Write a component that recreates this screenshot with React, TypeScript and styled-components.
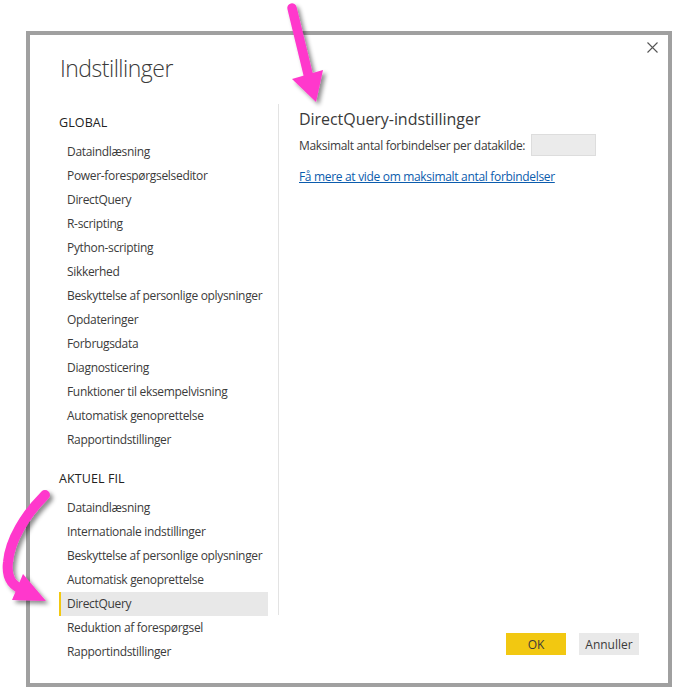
import React from "react";
import styled, { createGlobalStyle } from "styled-components";

const Global = createGlobalStyle`
  html, body { margin: 0; padding: 0; background: #ffffff; }
  body { font-family: "Open Sans", "Noto Sans", sans-serif; color: #333333; }
`;

const Page = styled.div`
  position: relative;
  width: 673px;
  height: 687px;
  overflow: hidden;
  padding: 31px 0 0 26px;
  box-sizing: border-box;
`;

const Dialog = styled.div`
  width: 646px;
  height: 656px;
  box-sizing: border-box;
  border: 4px solid #a0a0a0;
  background: #ffffff;
  display: flex;
  flex-direction: column;
`;

const Header = styled.div`
  display: flex;
  justify-content: space-between;
  align-items: flex-start;
  height: 69px;
  padding: 0 10px 0 30px;
  box-sizing: border-box;
`;

const Title = styled.h1`
  margin: 17px 0 0 0;
  font-size: 23px;
  font-weight: 300;
  line-height: 32px;
  color: #3a3a3a;
  letter-spacing: -0.5px;
`;

const CloseButton = styled.button`
  margin-top: 6px;
  width: 12px;
  height: 12px;
  padding: 0;
  border: none;
  background: transparent;
  display: flex;
  align-items: center;
  justify-content: center;
`;

const Body = styled.div`
  flex: 1;
  display: flex;
  min-height: 0;
`;

const Sidebar = styled.nav`
  width: 209px;
  margin-left: 29px;
  padding-top: 7px;
  display: flex;
  flex-direction: column;
`;

const SectionHeading = styled.div<{ $first?: boolean }>`
  height: 24px;
  line-height: 24px;
  margin-top: ${(p) => (p.$first ? 0 : 15)}px;
  margin-bottom: 5px;
  font-size: 12.5px;
  font-weight: 500;
  color: #222222;
  letter-spacing: 0.1px;
`;

const NavItem = styled.div<{ $active?: boolean }>`
  height: 24px;
  line-height: 24px;
  padding-left: ${(p) => (p.$active ? 6 : 8)}px;
  border-left: ${(p) => (p.$active ? "2px solid #f2c811" : "none")};
  background: ${(p) => (p.$active ? "#e8e8e8" : "transparent")};
  font-size: 12px;
  color: #3b3b3b;
  white-space: nowrap;
  letter-spacing: -0.32px;
`;

const Divider = styled.div`
  width: 1px;
  height: 511px;
  margin-left: 10px;
  background: #e3e3e3;
  flex-shrink: 0;
`;

const Main = styled.main`
  flex: 1;
  display: flex;
  flex-direction: column;
  justify-content: space-between;
  padding: 4px 29px 28px 20px;
`;

const Content = styled.div`
  display: flex;
  flex-direction: column;
`;

const PanelTitle = styled.h2`
  margin: 0;
  font-size: 16px;
  font-weight: 400;
  line-height: 22px;
  color: #3a3a3a;
  letter-spacing: -0.05px;
`;

const FieldRow = styled.div`
  display: flex;
  align-items: center;
  gap: 6px;
  margin-top: 4px;
`;

const FieldLabel = styled.label`
  font-size: 12px;
  color: #3b3b3b;
  letter-spacing: -0.32px;
`;

const NumberInput = styled.input`
  width: 65px;
  height: 22px;
  box-sizing: border-box;
  border: 1px solid #dddddd;
  background: #ebebeb;
  padding: 0 4px;
  font-size: 12px;
  font-family: inherit;
`;

const HelpLink = styled.a`
  margin-top: 12px;
  font-size: 12px;
  color: #0b5cad;
  text-decoration: underline;
  letter-spacing: -0.32px;
`;

const Footer = styled.div`
  display: flex;
  justify-content: flex-end;
  gap: 13px;
`;

const Button = styled.button<{ $primary?: boolean }>`
  width: 60px;
  height: 22px;
  border: none;
  padding: 0;
  font-family: inherit;
  font-size: 12px;
  color: #3b3b3b;
  background: ${(p) => (p.$primary ? "#f2c811" : "#e9e9e9")};
`;

const Overlay = styled.svg`
  position: absolute;
  left: 0;
  top: 0;
  width: 673px;
  height: 687px;
  pointer-events: none;
`;

const globalItems = [
  "Dataindlæsning",
  "Power-forespørgselseditor",
  "DirectQuery",
  "R-scripting",
  "Python-scripting",
  "Sikkerhed",
  "Beskyttelse af personlige oplysninger",
  "Opdateringer",
  "Forbrugsdata",
  "Diagnosticering",
  "Funktioner til eksempelvisning",
  "Automatisk genoprettelse",
  "Rapportindstillinger",
];

const fileItems = [
  "Dataindlæsning",
  "Internationale indstillinger",
  "Beskyttelse af personlige oplysninger",
  "Automatisk genoprettelse",
  "DirectQuery",
  "Reduktion af forespørgsel",
  "Rapportindstillinger",
];

export default function App() {
  return (
    <Page>
      <Global />
      <Dialog>
        <Header>
          <Title>Indstillinger</Title>
          <CloseButton aria-label="Luk">
            <svg width="11" height="11" viewBox="0 0 11 11">
              <path d="M0.5 0.5 L10.5 10.5 M10.5 0.5 L0.5 10.5" stroke="#555" strokeWidth="1.1" fill="none" />
            </svg>
          </CloseButton>
        </Header>
        <Body>
          <Sidebar>
            <SectionHeading $first>GLOBAL</SectionHeading>
            {globalItems.map((t) => (
              <NavItem key={"g" + t}>{t}</NavItem>
            ))}
            <SectionHeading>AKTUEL FIL</SectionHeading>
            {fileItems.map((t) => (
              <NavItem key={"f" + t} $active={t === "DirectQuery"}>
                {t}
              </NavItem>
            ))}
          </Sidebar>
          <Divider />
          <Main>
            <Content>
              <PanelTitle>DirectQuery-indstillinger</PanelTitle>
              <FieldRow>
                <FieldLabel>Maksimalt antal forbindelser per datakilde:</FieldLabel>
                <NumberInput type="text" defaultValue="" />
              </FieldRow>
              <HelpLink href="#">Få mere at vide om maksimalt antal forbindelser</HelpLink>
            </Content>
            <Footer>
              <Button $primary>OK</Button>
              <Button>Annuller</Button>
            </Footer>
          </Main>
        </Body>
      </Dialog>
      <Overlay viewBox="0 0 673 687">
        <defs>
          <filter id="sh" x="-50%" y="-50%" width="200%" height="200%">
            <feDropShadow dx="3" dy="3" stdDeviation="2.2" floodColor="#000" floodOpacity="0.45" />
          </filter>
        </defs>
        <g filter="url(#sh)" fill="#ff38cc" stroke="#ff38cc">
          <path d="M292 8 L309 78" strokeWidth="9.5" strokeLinecap="round" fill="none" />
          <polygon points="292,79 323,70 316,102" stroke="none" />
        </g>
        <g filter="url(#sh)" fill="#ff38cc" stroke="#ff38cc">
          <path d="M45 495 C 25 515 10 540 8 562 C 6 578 12 586 24 590" strokeWidth="10" strokeLinecap="round" fill="none" />
          <polygon points="23,574 12,600 46,601" stroke="none" />
        </g>
      </Overlay>
    </Page>
  );
}
